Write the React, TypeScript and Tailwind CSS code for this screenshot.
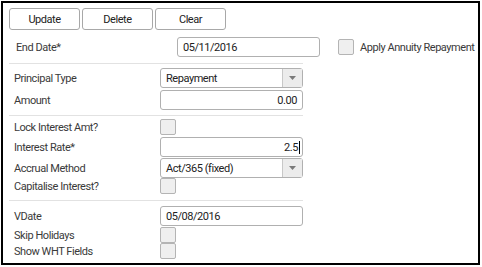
import React from "react";

const font = { fontFamily: "Roboto, 'Liberation Sans', sans-serif" };

function Checkbox() {
  return <div className="h-4 w-4 rounded-[2px] border border-[#b4b4b4] bg-[#efefef]" />;
}

function TextBox({ value, right }: { value: string; right?: boolean }) {
  return (
    <div
      className={`flex h-5 w-[143px] items-center rounded-[3px] border border-[#b0b0b0] bg-white px-[5px] text-[#222] ${
        right ? "justify-end" : ""
      }`}
    >
      {value}
    </div>
  );
}

function Select({ value }: { value: string }) {
  return (
    <div className="flex h-5 w-[143px] items-stretch rounded-[3px] border border-[#b0b0b0] bg-white text-[#222]">
      <div className="flex flex-1 items-center px-[5px]">{value}</div>
      <div className="flex w-[20px] items-center justify-center border-l border-[#c8c8c8] bg-[#ececec]">
        <svg width="7" height="4" viewBox="0 0 7 4">
          <path d="M0 0 L7 0 L3.5 4 Z" fill="#7a7a7a" />
        </svg>
      </div>
    </div>
  );
}

function Row({ label, children, className = "" }: { label: string; children: React.ReactNode; className?: string }) {
  return (
    <div className={`flex items-center ${className}`}>
      <div className="w-[151px] pl-[5px] text-[#3a3a3a]">{label}</div>
      {children}
    </div>
  );
}

function Sep({ className = "" }: { className?: string }) {
  return <div className={`h-px w-[294px] bg-[#e2e2e2] ${className}`} />;
}

export default function App() {
  return (
    <div className="h-[267px] w-[482px] bg-white p-[1px]" style={font}>
      <div className="h-[264px] w-[479px] border-2 border-black pl-[6px] pt-[5px] text-[11px] leading-none tracking-[-0.45px]">
        <div className="flex gap-[2px]">
          {["Update", "Delete", "Clear"].map((b) => (
            <div
              key={b}
              className="flex h-[22px] w-[71px] items-center justify-center rounded-[3px] border border-[#a8a8a8] bg-white text-[#222]"
            >
              {b}
            </div>
          ))}
        </div>

        <div className="mt-[7px] flex h-5 items-center">
          <div className="w-[168px] pl-[7px] text-[#3a3a3a]">End Date*</div>
          <TextBox value="05/11/2016" />
          <div className="ml-[18px] flex items-center gap-[6px] whitespace-nowrap text-[#3a3a3a]">
            <Checkbox />
            <span>Apply Annuity Repayment</span>
          </div>
        </div>

        <Sep className="mt-[6px]" />

        <Row label="Principal Type" className="mt-[4px]">
          <Select value="Repayment" />
        </Row>
        <Row label="Amount" className="mt-[2px]">
          <TextBox value="0.00" right />
        </Row>

        <Sep className="mt-[5px]" />

        <Row label="Lock Interest Amt?" className="mt-[3px]">
          <Checkbox />
        </Row>
        <Row label="Interest Rate*" className="mt-[2px]">
          <div className="flex h-5 w-[143px] items-center justify-end rounded-[3px] border border-[#b0b0b0] bg-white pr-[2px] text-[#222]">
            2.5
            <span className="ml-px h-[13px] w-px bg-black" />
          </div>
        </Row>
        <Row label="Accrual Method" className="mt-[1px]">
          <Select value="Act/365 (fixed)" />
        </Row>
        <Row label="Capitalise Interest?">
          <Checkbox />
        </Row>

        <Sep className="mt-[6px]" />

        <Row label="VDate" className="mt-[5px]">
          <TextBox value="05/08/2016" />
        </Row>
        <Row label="Skip Holidays" className="mt-[1px]">
          <Checkbox />
        </Row>
        <Row label="Show WHT Fields">
          <Checkbox />
        </Row>
      </div>
    </div>
  );
}
